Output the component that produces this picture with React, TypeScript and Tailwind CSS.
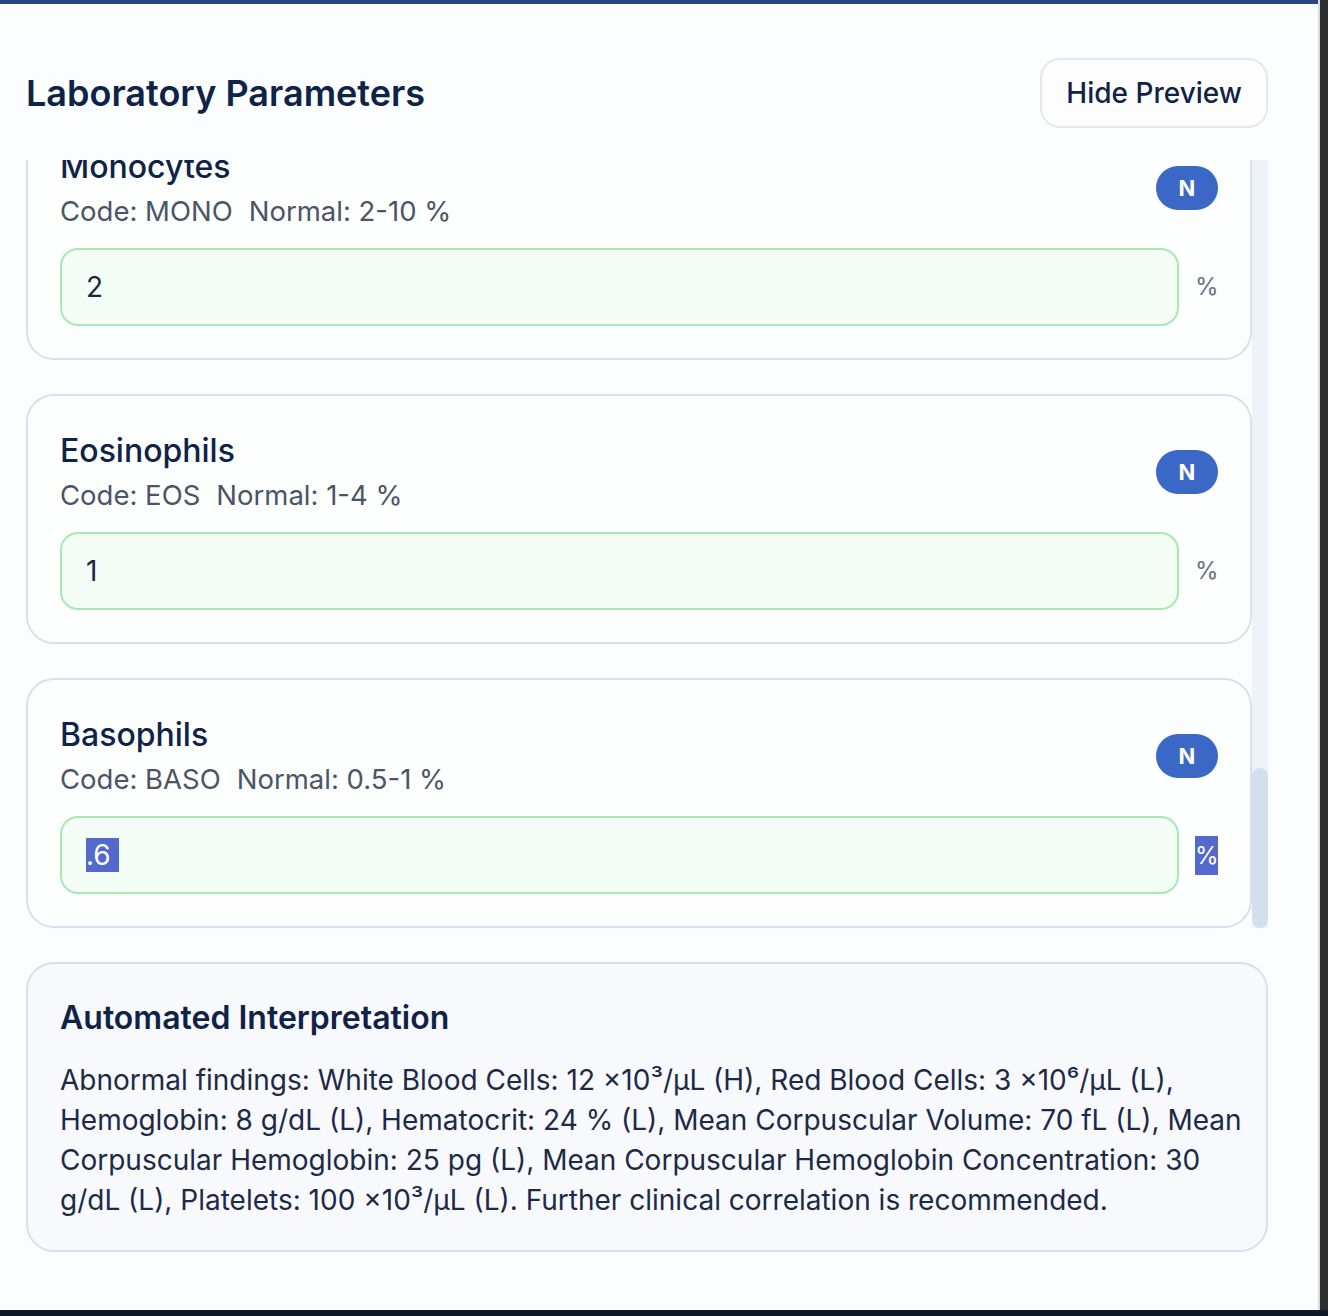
import React from "react";

type Param = {
  name: string;
  code: string;
  normal: string;
  value: string;
  selected?: boolean;
};

const params: Param[] = [
  { name: "Monocytes", code: "MONO", normal: "2-10 %", value: "2" },
  { name: "Eosinophils", code: "EOS", normal: "1-4 %", value: "1" },
  { name: "Basophils", code: "BASO", normal: "0.5-1 %", value: ".6", selected: true },
];

function ParamCard({ p }: { p: Param }) {
  return (
    <div className="h-[250px] shrink-0 rounded-[28px] border-2 border-[#d6e0ee] bg-[#fdfefe] pl-[32px] pr-[32px] pt-[35px]">
      <div className="flex items-center justify-between">
        <div className="flex flex-col">
          <div className="text-[32px] leading-[40px] font-medium text-[#0f2347]">{p.name}</div>
          <div className="mt-[6px] text-[27.5px] leading-[36px] text-[#4b5565]">
            Code: {p.code}
            <span className="ml-[16px]">Normal: {p.normal}</span>
          </div>
        </div>
        <div className="flex h-[44px] w-[62px] items-center justify-center rounded-full bg-[#3b68c6] text-[22px] font-bold text-white">
          N
        </div>
      </div>
      <div className="mt-[19px] flex items-center gap-[16px]">
        <div className="flex h-[78px] flex-1 items-center rounded-[18px] border-2 border-[#a8e9b2] bg-[#f3fcf5] pl-[24px] text-[28px] text-[#1c2740]">
          {p.selected ? (
            <span className="bg-[#5469cc] pr-[8px] leading-[34px] text-white">{p.value}</span>
          ) : (
            p.value
          )}
        </div>
        {p.selected ? (
          <span className="w-[23px] bg-[#5469cc] text-center text-[24px] leading-[39px] text-white">%</span>
        ) : (
          <span className="w-[23px] text-center text-[24px] text-[#6b7280]">%</span>
        )}
      </div>
    </div>
  );
}

export default function App() {
  return (
    <div
      className="flex h-[1316px] w-[1328px] flex-col overflow-hidden bg-[#111827]"
      style={{ fontFamily: "Inter, 'Noto Sans', sans-serif" }}
    >
      <div className="flex h-[1310px]">
        <div className="flex w-[1318px] flex-col border-t-4 border-[#28467f] bg-[#fcfdfe]">
          {/* header */}
          <div className="flex items-center justify-between pl-[26px] pr-[50px] pt-[54px]">
            <h1 className="text-[36px] font-semibold text-[#0f2347]">Laboratory Parameters</h1>
            <button className="h-[70px] rounded-[20px] border-2 border-[#e5e7eb] bg-[#fdfdfe] px-[24px] text-[28px] font-medium text-[#0f2347]">
              Hide Preview
            </button>
          </div>

          {/* scroll area */}
          <div className="mt-[32px] flex h-[768px] pl-[26px] pr-[50px]">
            <div className="flex-1 overflow-hidden">
              <div className="-mt-[50px] flex flex-col gap-[34px]">
                {params.map((p) => (
                  <ParamCard key={p.code} p={p} />
                ))}
              </div>
            </div>
            <div className="flex w-[16px] flex-col justify-end bg-[#edf1f8]">
              <div className="h-[160px] rounded-full bg-[#d4dfee]" />
            </div>
          </div>

          {/* interpretation */}
          <div className="ml-[26px] mr-[50px] mt-[34px] h-[290px] rounded-[28px] border-2 border-[#d6e0ee] bg-[#f8f9fc] pl-[32px] pr-[12px] pt-[34px]">
            <h2 className="text-[32px] leading-[40px] font-semibold text-[#0f2347]">Automated Interpretation</h2>
            <p className="mt-[22px] whitespace-nowrap text-[28px] leading-[40px] text-[#1c2a48]">
              Abnormal findings: White Blood Cells: 12 ×10³/μL (H), Red Blood Cells: 3 ×10⁶/μL (L),
              <br />
              Hemoglobin: 8 g/dL (L), Hematocrit: 24 % (L), Mean Corpuscular Volume: 70 fL (L), Mean
              <br />
              Corpuscular Hemoglobin: 25 pg (L), Mean Corpuscular Hemoglobin Concentration: 30
              <br />
              g/dL (L), Platelets: 100 ×10³/μL (L). Further clinical correlation is recommended.
            </p>
          </div>
        </div>
        <div className="w-[2px] bg-[#d3dbe7]" />
        <div className="flex-1 bg-[#2e2e2e]" />
      </div>
    </div>
  );
}
